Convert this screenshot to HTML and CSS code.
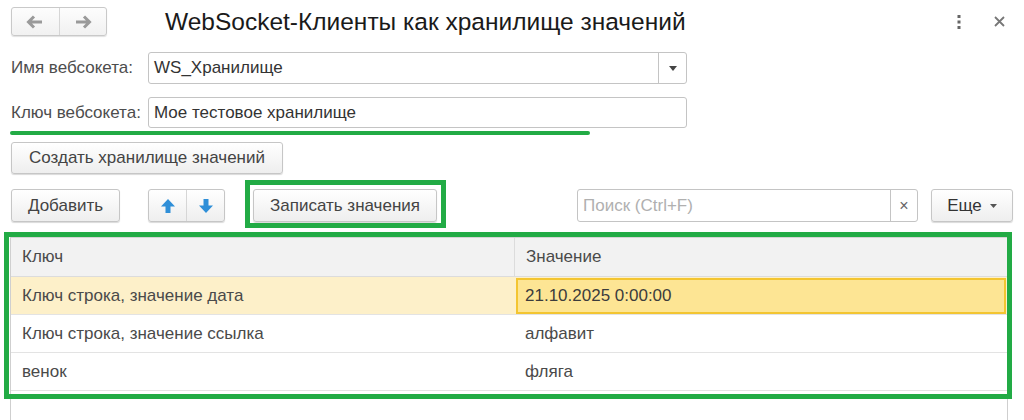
FILE: index.html
```html
<!DOCTYPE html>
<html lang="ru">
<head>
<meta charset="utf-8">
<link rel="stylesheet" href="styles.css">
</head>
<body>
<div class="page">
  <header class="header">
    <div class="nav">
      <button class="nav-btn" aria-label="Назад">
        <svg width="18" height="14" viewBox="0 0 18 14"><path d="M8 1.5 L2.5 7 L8 12.5 M2.5 7 H16" fill="none" stroke="#9a9a9a" stroke-width="3"/></svg>
      </button>
      <button class="nav-btn" aria-label="Вперед">
        <svg width="18" height="14" viewBox="0 0 18 14"><path d="M10 1.5 L15.5 7 L10 12.5 M15.5 7 H2" fill="none" stroke="#9a9a9a" stroke-width="3"/></svg>
      </button>
    </div>
    <h1 class="title">WebSocket-Клиенты как хранилище значений</h1>
    <div class="win-icons">
      <svg class="kebab" width="4" height="14" viewBox="0 0 4 14"><rect x="0.5" y="0" width="3" height="3" fill="#666"/><rect x="0.5" y="5.5" width="3" height="3" fill="#666"/><rect x="0.5" y="11" width="3" height="3" fill="#666"/></svg>
      <svg class="close" width="11" height="11" viewBox="0 0 11 11"><path d="M1 1 L10 10 M10 1 L1 10" stroke="#777" stroke-width="1.8"/></svg>
    </div>
  </header>

  <section class="form">
    <div class="field">
      <span class="label">Имя вебсокета:</span>
      <div class="input select">
        <span class="value">WS_Хранилище</span>
        <span class="drop"><svg width="8" height="5" viewBox="0 0 8 5"><path d="M0 0 H8 L4 5 Z" fill="#444"/></svg></span>
      </div>
    </div>
    <div class="field field-key">
      <span class="label">Ключ вебсокета:</span>
      <div class="input">
        <span class="value">Мое тестовое хранилище</span>
      </div>
      <span class="underline"></span>
    </div>
    <div class="create-row">
      <button class="btn btn-create">Создать хранилище значений</button>
    </div>
    <div class="toolbar">
      <button class="btn btn-add">Добавить</button>
      <div class="btn-group">
        <button class="btn grp-btn" aria-label="Вверх">
          <svg width="16" height="16" viewBox="0 0 16 16"><path d="M8 1 L15 8.5 H10.5 V15 H5.5 V8.5 H1 Z" fill="#2f8fd8"/></svg>
        </button>
        <button class="btn grp-btn" aria-label="Вниз">
          <svg width="16" height="16" viewBox="0 0 16 16"><path d="M8 15 L15 7.5 H10.5 V1 H5.5 V7.5 H1 Z" fill="#2f8fd8"/></svg>
        </button>
      </div>
      <div class="highlight-wrap">
        <button class="btn btn-save">Записать значения</button>
      </div>
      <div class="search">
        <span class="placeholder">Поиск (Ctrl+F)</span>
        <span class="clear">×</span>
      </div>
      <button class="btn btn-more">Еще <svg width="7" height="4" viewBox="0 0 7 4"><path d="M0 0 H7 L3.5 4 Z" fill="#555"/></svg></button>
    </div>
  </section>

  <section class="table">
    <div class="row head">
      <div class="cell c1">Ключ</div>
      <div class="cell c2">Значение</div>
    </div>
    <div class="row current">
      <div class="cell c1">Ключ строка, значение дата</div>
      <div class="cell c2 selected">21.10.2025 0:00:00</div>
    </div>
    <div class="row">
      <div class="cell c1">Ключ строка, значение ссылка</div>
      <div class="cell c2">алфавит</div>
    </div>
    <div class="row">
      <div class="cell c1">венок</div>
      <div class="cell c2">фляга</div>
    </div>
    <span class="table-highlight"></span>
  </section>
</div>
</body>
</html>
```

FILE: styles.css
```css
* { box-sizing: border-box; }
html, body { margin: 0; padding: 0; background: #fff; }
body {
  font-family: "Liberation Sans", Arial, sans-serif;
  color: #4a4a4a;
  width: 1024px;
  height: 420px;
  overflow: hidden;
}
button { font-family: inherit; }

.header {
  display: flex;
  align-items: center;
  height: 44px;
  padding: 7px 0 0 11px;
}
.nav {
  display: flex;
  width: 96px;
  height: 29px;
  border: 1px solid #c9c9c9;
  border-radius: 3px;
  background: linear-gradient(#fdfdfd, #f1f1f1);
  box-shadow: 0 1px 1px rgba(0,0,0,0.12);
  align-self: flex-start;
}
.nav-btn {
  flex: 1;
  border: 0;
  background: transparent;
  padding: 0;
  display: flex;
  align-items: center;
  justify-content: center;
}
.nav-btn + .nav-btn { border-left: 1px solid #d6d6d6; }
.title {
  margin: 0 0 0 58px;
  font-weight: normal;
  font-size: 24.5px;
  color: #1a1a1a;
  align-self: flex-start;
  line-height: 29px;
}
.win-icons {
  margin-left: auto;
  display: flex;
  align-items: center;
  align-self: flex-start;
  height: 29px;
  padding-right: 19px;
}
.kebab { margin-right: 33px; }

.form { padding: 8px 0 0 11px; }
.field {
  display: flex;
  align-items: center;
  height: 32px;
  position: relative;
}
.field-key { margin-top: 13px; height: 31px; }
.label {
  width: 137px;
  font-size: 17px;
  color: #4d4d4d;
}
.input {
  width: 539px;
  height: 100%;
  border: 1px solid #c4c4c4;
  border-radius: 3px;
  display: flex;
  align-items: center;
  background: #fff;
}
.value {
  flex: 1;
  padding-left: 5px;
  font-size: 17px;
  color: #333;
}
.drop {
  width: 28px;
  height: 100%;
  border-left: 1px solid #c4c4c4;
  display: flex;
  align-items: center;
  justify-content: center;
}
.underline {
  position: absolute;
  left: -1px;
  top: 34px;
  width: 580px;
  height: 4px;
  border-radius: 2px;
  background: #22ab45;
}

.btn {
  height: 33px;
  border: 1px solid #c6c6c6;
  border-radius: 3px;
  background: linear-gradient(#ffffff, #eeeeee);
  box-shadow: 0 1px 1px rgba(0,0,0,0.15);
  font-size: 17px;
  color: #444;
  padding: 0;
}
.create-row { margin-top: 14px; }
.btn-create { width: 272px; height: 32px; }

.toolbar {
  display: flex;
  align-items: center;
  margin-top: 15px;
  height: 33px;
}
.btn-add { width: 109px; }
.btn-group {
  display: flex;
  margin-left: 28px;
  width: 77px;
  height: 33px;
  border: 1px solid #c6c6c6;
  border-radius: 3px;
  box-shadow: 0 1px 1px rgba(0,0,0,0.15);
  background: linear-gradient(#ffffff, #eeeeee);
}
.grp-btn {
  flex: 1;
  height: 100%;
  border: 0;
  border-radius: 0;
  box-shadow: none;
  background: transparent;
  display: flex;
  align-items: center;
  justify-content: center;
}
.grp-btn + .grp-btn { border-left: 1px solid #d6d6d6; }
.highlight-wrap {
  position: relative;
  margin-left: 28px;
}
.highlight-wrap::after {
  content: "";
  position: absolute;
  left: -8px;
  right: -9px;
  top: -9px;
  bottom: -6px;
  border: 5px solid #22ab45;
  pointer-events: none;
}
.btn-save { width: 184px; }
.search {
  margin-left: 140px;
  width: 341px;
  height: 33px;
  border: 1px solid #c4c4c4;
  border-radius: 3px;
  display: flex;
  align-items: center;
}
.placeholder {
  flex: 1;
  padding-left: 5px;
  font-size: 17px;
  color: #b0b0b0;
}
.clear {
  width: 27px;
  height: 100%;
  border-left: 1px solid #c4c4c4;
  display: flex;
  align-items: center;
  justify-content: center;
  font-size: 16px;
  color: #666;
}
.btn-more {
  margin-left: 13px;
  width: 82px;
  display: flex;
  align-items: center;
  justify-content: center;
  gap: 8px;
  font-size: 17px;
  color: #333;
}

.table {
  position: relative;
  margin: 15px 0 0 10px;
  width: 998px;
  height: 200px;
  border-left: 1px solid #cfcfcf;
  border-right: 1px solid #cfcfcf;
  border-top: 1px solid #d4d4d4;
}
.row {
  display: flex;
  height: 38px;
  border-bottom: 1px solid #e3e3e3;
  font-size: 17px;
  color: #4a4a4a;
}
.row.head {
  height: 39px;
  background: #f2f2f2;
  border-bottom: 1px solid #dcdcdc;
}
.cell {
  display: flex;
  align-items: center;
  padding-left: 11px;
}
.c1 { width: 503px; }
.c2 { flex: 1; padding-left: 11px; }
.head .c2 { border-left: 1px solid #dcdcdc; }
.row.current { background: #fdf0c9; }
.selected {
  background: #fde594;
  border: 2px solid #f3c531;
  margin: 1px 1px 0 2px;
  padding-left: 7px;
  color: #3c3c3c;
}
.table-highlight {
  position: absolute;
  left: -7px;
  right: -5px;
  top: -6px;
  height: 167px;
  border: 5px solid #22ab45;
  pointer-events: none;
}
```
